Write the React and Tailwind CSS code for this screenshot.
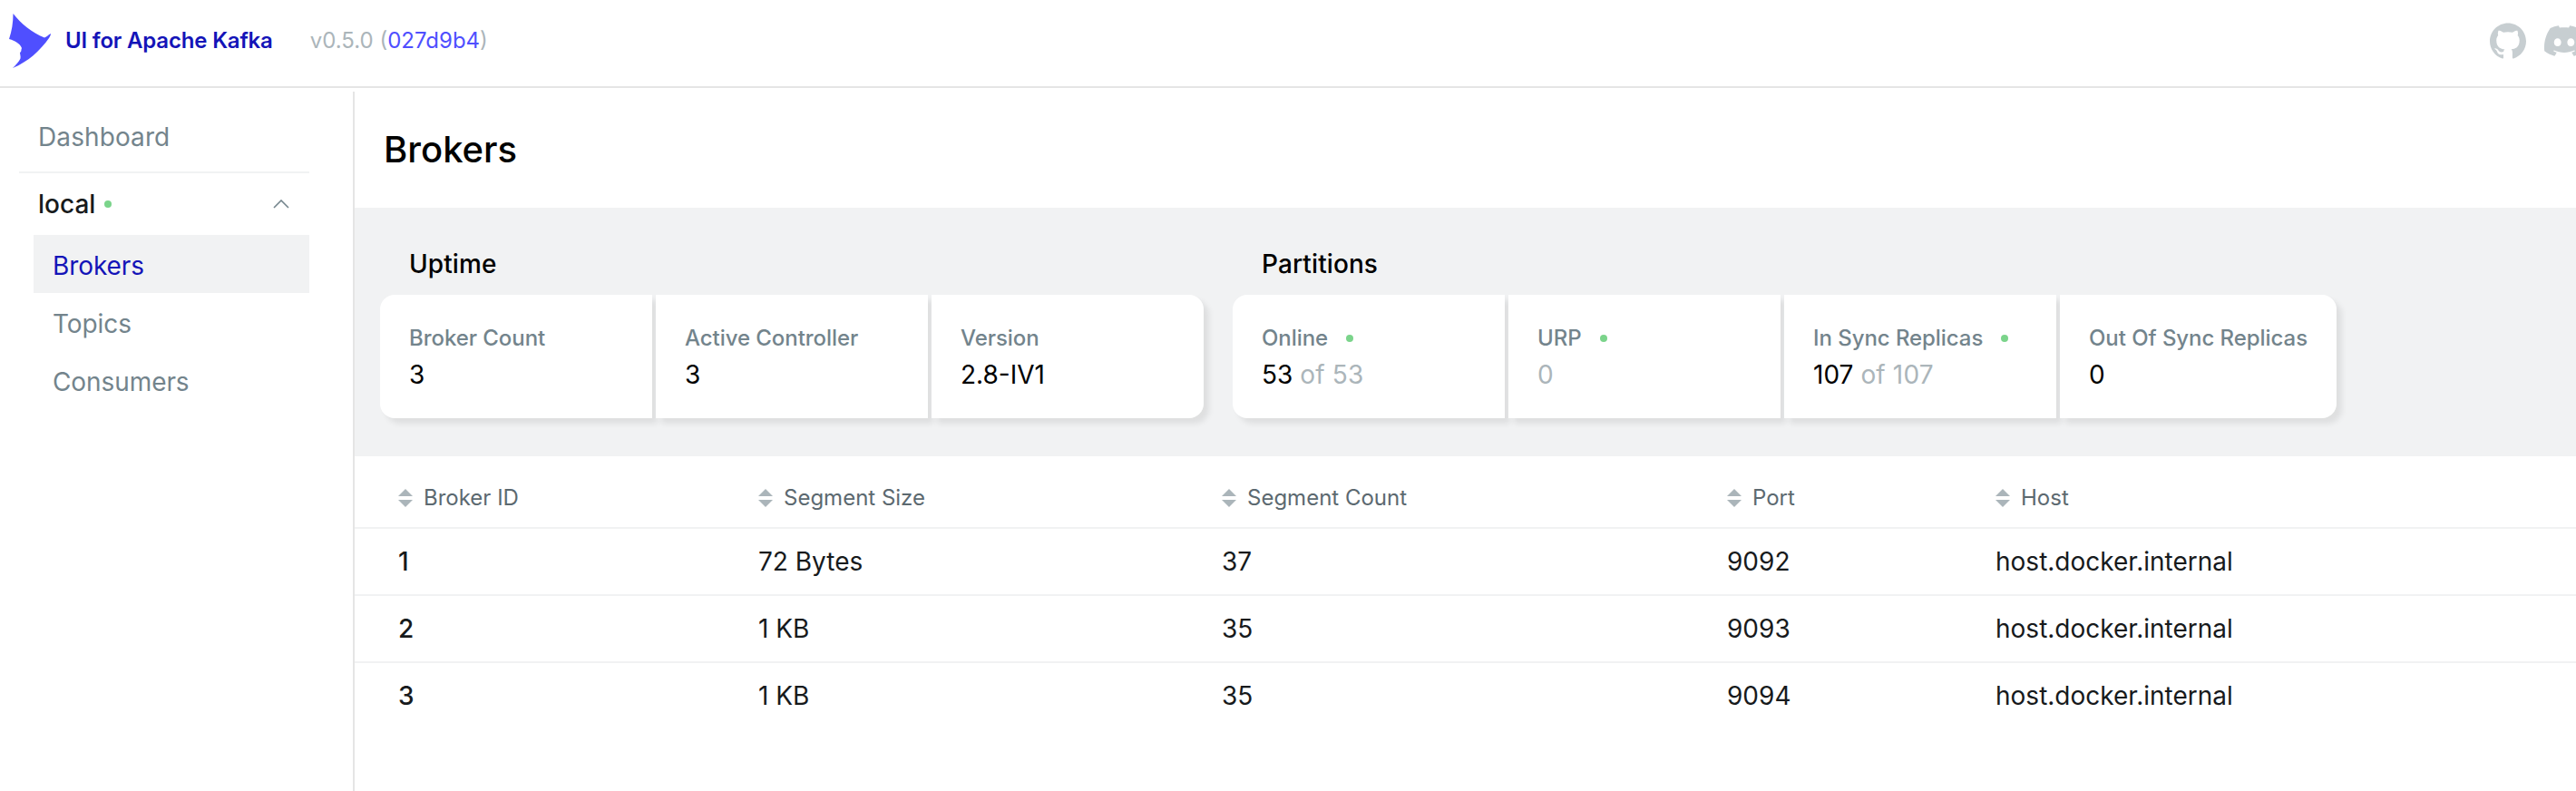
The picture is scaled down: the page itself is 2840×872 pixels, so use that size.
import React, { useState } from "react"
import { SiGithub, SiDiscord } from "react-icons/si"

const menuItems = ["Brokers", "Topics", "Consumers"]

const metrics = [
  {
    title: "Uptime",
    items: [
      { label: "Broker Count", value: "3" },
      { label: "Active Controller", value: "3" },
      { label: "Version", value: "2.8-IV1" }
    ]
  },
  {
    title: "Partitions",
    items: [
      { label: "Online", value: "53", total: "of 53", alert: true },
      { label: "URP", light: "0", alert: true },
      { label: "In Sync Replicas", value: "107", total: "of 107", alert: true },
      { label: "Out Of Sync Replicas", value: "0" }
    ]
  }
]

const columns = [
  { title: "Broker ID", width: "w-[397px]" },
  { title: "Segment Size", width: "w-[511px]" },
  { title: "Segment Count", width: "w-[557px]" },
  { title: "Port", width: "w-[296px]" },
  { title: "Host", width: "flex-1" }
]

const brokers = [
  ["1", "72 Bytes", "37", "9092", "host.docker.internal"],
  ["2", "1 KB", "35", "9093", "host.docker.internal"],
  ["3", "1 KB", "35", "9094", "host.docker.internal"]
]

function Logo() {
  return (
    <svg width="46" height="60" viewBox="0 0 46 60" fill="#4F4FFF" className="shrink-0">
      <path d="M4.5 0C13 11 25 21 39 26.5C41 26 43 23.5 46 22C46 24 45 25 44 27C34 41 21 53 4 60C8 56 11 53 12.5 49.5C13 47 12 45 12 43C14 42 13 40 14 38C12 33 7 30 0 28C3 19 4.5 10 4.5 0Z" />
    </svg>
  )
}

function SortIcon() {
  return (
    <svg width="16" height="20" viewBox="0 0 16 20" fill="#ABB5BA" className="shrink-0">
      <path d="M8 0L16 8H0Z" />
      <path d="M8 20L0 12H16Z" />
    </svg>
  )
}

function Header() {
  return (
    <header className="flex h-[97px] items-center justify-between overflow-hidden border-b-2 border-[#E5E5E5] pb-[5px] pl-[10px]">
      <div className="flex items-center">
        <Logo />
        <span className="ml-4 text-2xl font-semibold tracking-[-0.18px] text-[#1414B8]">
          UI for Apache Kafka
        </span>
        <span className="ml-[41px] text-2xl text-[#ABB5BA]">
          v0.5.0 (<a className="text-[#4F4FFF]">027d9b4</a>)
        </span>
      </div>
      <div className="-mr-[9px] flex items-center gap-5 text-[#C7CED1]">
        <SiGithub size={40} />
        <SiDiscord size={44} />
      </div>
    </header>
  )
}

function Sidebar({ active, onSelect }) {
  const [open, setOpen] = useState(true)

  return (
    <aside className="h-[771px] w-[391px] shrink-0 border-r-2 border-[#E5E5E5] pl-[21px] text-[28px] leading-8">
      <div className="w-[320px]">
        <div className="flex h-[90px] items-center border-b-2 border-[#F1F2F3] pt-4 pb-1 pl-[21px] tracking-[0.1px] text-[#73848C]">
          Dashboard
        </div>

        <div
          onClick={() => setOpen(!open)}
          className="flex h-[68px] cursor-pointer items-center pl-[21px] pr-[22px] font-medium text-[#171A1C]"
        >
          <span>local</span>
          <span className="ml-[10px] size-2 rounded-full bg-[#7BD48B]" />
          <svg width="18" height="10" viewBox="0 0 18 10" fill="none" stroke="#73848C" strokeWidth="1.6" className="ml-auto">
            <path d="M1 9L9 1L17 9" />
          </svg>
        </div>

        {open && (
          <div className="pl-4">
            {menuItems.map(item => (
              <div
                key={item}
                onClick={() => onSelect(item)}
                className={`flex h-16 cursor-pointer items-center pl-[21px] pt-1 tracking-[-0.08px] ${
                  item === active ? "bg-[#F1F2F3] text-[#1414B8]" : "text-[#73848C]"
                }`}
              >
                {item}
              </div>
            ))}
          </div>
        )}
      </div>
    </aside>
  )
}

function Indicator({ item }) {
  return (
    <div className="flex min-w-[300px] flex-col bg-white px-8 pt-7 shadow-[6px_6px_6px_rgba(0,0,0,0.08)] first:rounded-l-2xl last:rounded-r-2xl">
      <div className="flex h-10 items-center text-2xl font-medium tracking-[-0.06px] text-[#73848C]">
        {item.label}
        {item.alert && <span className="ml-5 size-2 rounded-full bg-[#7BD48B]" />}
      </div>
      <div className="h-10 text-[28px] leading-10 text-black">
        {item.value}
        {item.total && <span className="tracking-[0.15px] text-[#ABB5BA]"> {item.total}</span>}
        {item.light && <span className="text-[#ABB5BA]">{item.light}</span>}
      </div>
    </div>
  )
}

function Metrics() {
  return (
    <div className="flex h-[274px] gap-8 bg-[#F1F2F3] pl-7 pt-[42px]">
      {metrics.map(section => (
        <div key={section.title}>
          <h2 className="h-[54px] pl-8 text-[28px] leading-[40px] font-medium tracking-[0.1px] text-black">
            {section.title}
          </h2>
          <div className="isolate flex h-[136px] gap-1">
            {section.items.map(item => (
              <Indicator key={item.label} item={item} />
            ))}
          </div>
        </div>
      ))}
    </div>
  )
}

function BrokersTable() {
  return (
    <div>
      <div className="flex h-20 items-center border-b-2 border-[#F1F2F3] pt-[18px] pb-1 pl-12">
        {columns.map(col => (
          <div key={col.title} className={`flex items-center gap-3 text-2xl text-[#5C6970] ${col.width}`}>
            <SortIcon />
            {col.title}
          </div>
        ))}
      </div>

      {brokers.map(row => (
        <div
          key={row[0]}
          className="flex h-[74px] items-center border-b-2 border-[#F1F2F3] pl-12 text-[28px] text-[#171A1C] last:border-transparent"
        >
          {row.map((cell, i) => (
            <div key={columns[i].title} className={`${columns[i].width} ${i === 0 ? "font-medium" : ""}`}>
              {cell}
            </div>
          ))}
        </div>
      ))}
    </div>
  )
}

export default function App() {
  const [page, setPage] = useState("Brokers")

  return (
    <div className="h-[872px] w-[2840px] overflow-hidden bg-white font-['Inter',sans-serif]">
      <Header />
      <div className="flex pt-1">
        <Sidebar active={page} onSelect={setPage} />
        <main className="min-w-0 flex-1">
          <h1 className="flex h-32 items-center pl-8 text-[40px] font-medium text-black">{page}</h1>
          <Metrics />
          <BrokersTable />
        </main>
      </div>
    </div>
  )
}
